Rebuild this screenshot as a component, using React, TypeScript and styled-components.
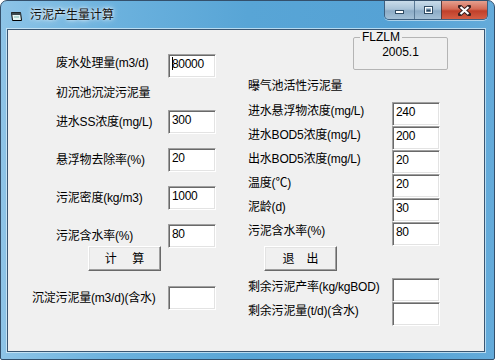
import React from 'react';
import styled, {createGlobalStyle} from 'styled-components';

const GlobalStyle = createGlobalStyle`
  html, body {
    margin: 0;
    padding: 0;
    background: #ffffff;
  }
`;

const FONT = `"Liberation Sans", "Noto Sans CJK SC", sans-serif`;

const Window = styled.div`
    width: 495px;
    height: 360px;
    box-sizing: border-box;
    display: flex;
    flex-direction: column;
    border: 1px solid #34506c;
    border-radius: 7px 7px 2px 2px;
    background: linear-gradient(to right, #8ec4e7 0%, #6cb2de 22%, #58a5d6 50%, #55a2d5 80%, #64abda 100%);
    font-family: ${FONT};
    overflow: hidden;
`;

const TitleBar = styled.div`
    height: 28px;
    flex: none;
    display: flex;
    align-items: flex-start;
    padding: 0 6px 0 9px;
`;

const AppIcon = styled.svg`
    margin-top: 9px;
    flex: none;
`;

const Caption = styled.span`
    margin: 6px 0 0 7px;
    font-size: 12px;
    line-height: 16px;
    color: #111;
    text-shadow: 0 0 6px rgba(255, 255, 255, 0.95), 0 0 3px rgba(255, 255, 255, 0.9);
    flex: 1;
`;

const CaptionButtons = styled.div`
    display: flex;
    border: 1px solid #3d5f80;
    border-top: none;
    border-radius: 0 0 5px 5px;
    overflow: hidden;
    box-shadow: 0 1px 0 rgba(255, 255, 255, 0.5);
`;

const CaptionButton = styled.div<{ $width: number; $close?: boolean }>`
    width: ${p => p.$width}px;
    height: 18px;
    display: flex;
    align-items: center;
    justify-content: center;
    box-sizing: border-box;
    border-left: ${p => (p.$close ? '1px solid #5c3a3a' : '1px solid #5a7a96')};
    &:first-child {
        border-left: none;
    }
    background: ${p =>
        p.$close
            ? 'linear-gradient(to bottom, #e5a08f 0%, #d46a55 45%, #c0402a 55%, #d45e45 100%)'
            : 'linear-gradient(to bottom, #c9dcea 0%, #a9c3d8 45%, #8cabc6 55%, #a4c0d6 100%)'};
`;

const Client = styled.div`
    flex: 1;
    margin: 0 9px 7px 6px;
    border: 1px solid #3a5672;
    box-shadow: 0 0 0 1px rgba(215, 236, 248, 0.75);
    background: #f0f0f0;
    display: grid;
    grid-template-columns: 240px 1fr;
    font-size: 12px;
    color: #000;
`;

const Column = styled.div<{ $pad: number }>`
    display: flex;
    flex-direction: column;
    align-items: flex-start;
    padding-left: ${p => p.$pad}px;
`;

const Field = styled.div<{ $top: number; $shift?: number; $top_aligned?: boolean }>`
    display: flex;
    align-items: ${p => (p.$top_aligned ? 'flex-start' : 'center')};
    height: 24px;
    margin-top: ${p => p.$top}px;
    margin-left: ${p => p.$shift ?? 0}px;
`;

const Label = styled.span<{ $width: number; $lift?: number }>`
    width: ${p => p.$width}px;
    flex: none;
    line-height: 16px;
    padding-top: ${p => Math.max(p.$lift ?? 0, 0)}px;
    padding-bottom: ${p => Math.max(-(p.$lift ?? 0), 0)}px;
    letter-spacing: -0.2px;
    white-space: nowrap;
`;

const SectionTitle = styled.div<{ $top: number }>`
    margin-top: ${p => p.$top}px;
    line-height: 16px;
    height: ${p => (p.$top < 5 ? 24 : 16)}px;
    letter-spacing: -0.2px;
    display: flex;
    align-items: center;
`;

const TextBox = styled.div<{ $caret?: boolean }>`
    width: 48px;
    height: 24px;
    box-sizing: border-box;
    background: #ffffff;
    border: 1px solid;
    border-color: #a0a0a0 #ffffff #ffffff #a0a0a0;
    box-shadow: inset 1px 1px 0 #696969, inset -1px -1px 0 #e3e3e3;
    padding: 2px 2px 0 3px;
    font-size: 12px;
    line-height: 15px;
    letter-spacing: -0.3px;
    white-space: nowrap;
    ${p =>
        p.$caret &&
        `&::before {
            content: '';
            display: inline-block;
            width: 1px;
            height: 13px;
            margin-right: -1px;
            background: #000;
            vertical-align: -2px;
        }`}
`;

const PushButton = styled.button<{ $left: number; $top: number }>`
    width: 73px;
    height: 25px;
    margin-left: ${p => p.$left}px;
    margin-top: ${p => p.$top}px;
    padding: 0;
    background: #f0f0f0;
    border: 1px solid;
    border-color: #ffffff #696969 #696969 #ffffff;
    box-shadow: inset -1px -1px 0 #a0a0a0, inset 1px 1px 0 #e3e3e3;
    font-family: ${FONT};
    font-size: 12px;
    line-height: 16px;
    color: #000;
    white-space: pre;
`;

const GroupBox = styled.fieldset`
    margin: 1px 0 0 105px;
    padding: 0;
    width: 95px;
    box-sizing: border-box;
    border: 1px solid #b4b4b4;
    border-radius: 2px;
`;

const GroupLegend = styled.legend`
    margin-left: 6px;
    padding: 0 2px;
    font-size: 12px;
    line-height: 12px;
`;

const GroupText = styled.div`
    height: 26px;
    box-sizing: border-box;
    padding-top: 2px;
    line-height: 14px;
    text-align: center;
`;

const leftRows = [
    {label: '进水SS浓度(mg/L)', value: '300', top: 5},
    {label: '悬浮物去除率(%)', value: '20', top: 14},
    {label: '污泥密度(kg/m3)', value: '1000', top: 14},
    {label: '污泥含水率(%)', value: '80', top: 14},
];

const rightRows = [
    {label: '进水悬浮物浓度(mg/L)', value: '240'},
    {label: '进水BOD5浓度(mg/L)', value: '200'},
    {label: '出水BOD5浓度(mg/L)', value: '20'},
    {label: '温度(℃)', value: '20'},
    {label: '泥龄(d)', value: '30'},
    {label: '污泥含水率(%)', value: '80'},
];

const TitleIcon = () => (
    <AppIcon width="13" height="12" viewBox="0 0 13 12">
        <path d="M1.5 2.5 L10.5 2.5 L11.5 10.5 L2.5 10.5 Z" fill="#e8f6f4" stroke="#000" strokeWidth="1"/>
        <path d="M1.5 2.5 L10.5 2.5 L10.8 5 L1.8 5 Z" fill="#3c4a50"/>
        <path d="M4 7 L9 7" stroke="#7ab8b0" strokeWidth="1"/>
    </AppIcon>
);

const MinimizeGlyph = () => (
    <svg width="11" height="9" viewBox="0 0 11 9">
        <rect x="1.5" y="4.5" width="8" height="3" fill="#fff" stroke="#2f4a62"/>
    </svg>
);

const MaximizeGlyph = () => (
    <svg width="11" height="9" viewBox="0 0 11 9">
        <rect x="1.5" y="0.5" width="8" height="7" fill="none" stroke="#2f4a62"/>
        <rect x="2.5" y="1.5" width="6" height="5" fill="none" stroke="#fff"/>
        <rect x="3.5" y="3.5" width="4" height="2" fill="#2f4a62"/>
    </svg>
);

const CloseGlyph = () => (
    <svg width="13" height="11" viewBox="0 0 13 11">
        <path d="M2 1.5 L11 9.5 M11 1.5 L2 9.5" stroke="#3a2020" strokeWidth="4" strokeLinecap="square"/>
        <path d="M2.5 2 L10.5 9 M10.5 2 L2.5 9" stroke="#fff" strokeWidth="2.2"/>
    </svg>
);

const App = () => {
    return (
        <>
            <GlobalStyle/>
            <Window>
                <TitleBar>
                    <TitleIcon/>
                    <Caption>污泥产生量计算</Caption>
                    <CaptionButtons>
                        <CaptionButton $width={29}><MinimizeGlyph/></CaptionButton>
                        <CaptionButton $width={27}><MaximizeGlyph/></CaptionButton>
                        <CaptionButton $width={46} $close><CloseGlyph/></CaptionButton>
                    </CaptionButtons>
                </TitleBar>
                <Client>
                    <Column $pad={48}>
                        <Field $top={24}>
                            <Label $width={112} $lift={-7}>废水处理量(m3/d)</Label>
                            <TextBox $caret>80000</TextBox>
                        </Field>
                        <SectionTitle $top={3}>初沉池沉淀污泥量</SectionTitle>
                        {leftRows.map(row => (
                            <Field key={row.label} $top={row.top}>
                                <Label $width={112}>{row.label}</Label>
                                <TextBox>{row.value}</TextBox>
                            </Field>
                        ))}
                        <PushButton $left={32} $top={-2}>{'计\u3000 算'}</PushButton>
                        <Field $top={15} $shift={-24}>
                            <Label $width={136}>沉淀污泥量(m3/d)(含水)</Label>
                            <TextBox/>
                        </Field>
                    </Column>
                    <Column $pad={0}>
                        <GroupBox>
                            <GroupLegend>FLZLM</GroupLegend>
                            <GroupText>2005.1</GroupText>
                        </GroupBox>
                        <SectionTitle $top={8}>曝气池活性污泥量</SectionTitle>
                        {rightRows.map((row, i) => (
                            <Field key={row.label} $top={i === 0 ? 8 : 0} $top_aligned>
                                <Label $width={144} $lift={1}>{row.label}</Label>
                                <TextBox>{row.value}</TextBox>
                            </Field>
                        ))}
                        <PushButton $left={16} $top={0}>{'退\u3000出'}</PushButton>
                        <Field $top={7} $top_aligned>
                            <Label $width={144} $lift={1}>剩余污泥产率(kg/kgBOD)</Label>
                            <TextBox/>
                        </Field>
                        <Field $top={0} $top_aligned>
                            <Label $width={144} $lift={1}>剩余污泥量(t/d)(含水)</Label>
                            <TextBox/>
                        </Field>
                    </Column>
                </Client>
            </Window>
        </>
    );
};

export default App;
